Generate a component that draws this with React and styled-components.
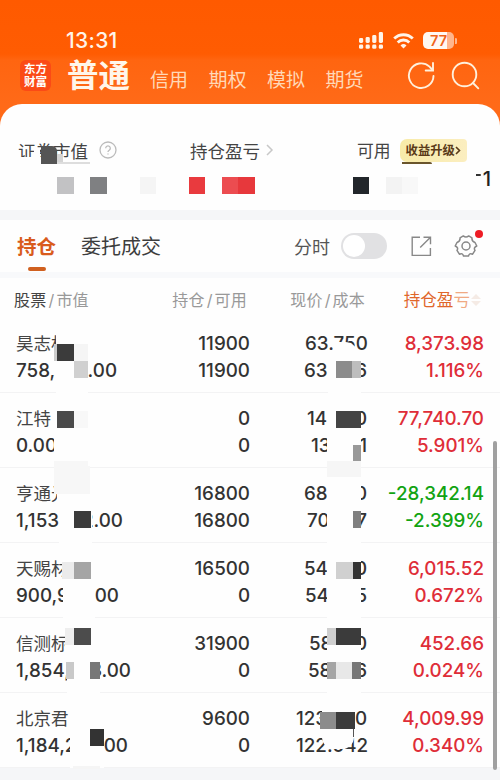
import React from "react";
import styled, { createGlobalStyle } from "styled-components";

const GlobalStyle = createGlobalStyle`
    * {
        box-sizing: border-box;
    }

    body {
        margin: 0;
        background: #f5f6f8;
        font-family: "Inter", "Noto Sans CJK SC", sans-serif;
    }
`;
const StyledPage = styled.div`
    position: relative;
    width: 500px;
    height: 780px;
    overflow: hidden;
    background: #f5f6f8;
    color: #333;
    white-space: nowrap;
`;
const StyledHeader = styled.header`
    height: 126px;
    background: linear-gradient(#ff5a00 0, #ff5c02 54px, #ff6510 60px, #ff6a18 104px);
`;
const StyledStatusBar = styled.div`
    display: flex;
    align-items: center;
    height: 56px;
    padding: 26px 43px 0 66px;
    color: #fff4e9;
`;
const StyledTime = styled.span`
    flex: 1;
    font-size: 21px;
    line-height: 30px;
    font-weight: 500;
    letter-spacing: 0.3px;
`;
const StyledStatusIcons = styled.div`
    display: flex;
    align-items: center;
    gap: 9px;
    margin-top: -1px;
`;
const StyledBattery = styled.div`
    display: flex;
    align-items: center;
    justify-content: center;
    width: 31px;
    height: 17px;
    border-radius: 5px;
    background: linear-gradient(90deg, #fff8f2 24px, #ffb58c 24px);
    color: #f0641a;
    font-size: 14.5px;
    line-height: 17px;
    font-weight: 600;
`;
const StyledNav = styled.nav`
    display: flex;
    align-items: center;
    height: 40px;
    padding: 0 20px;
`;
const StyledLogo = styled.div`
    display: flex;
    flex-direction: column;
    width: 31px;
    height: 31px;
    margin: -1px 16px 0 0;
    padding-top: 2px;
    border-radius: 6px;
    background: #fb4a16;
    color: #fff;
    font-family: "Noto Sans CJK SC", sans-serif;
    font-size: 11.5px;
    line-height: 13px;
    font-weight: 700;
    text-align: center;
`;
const StyledAccount = styled.span`
    width: 83px;
    color: #fff6ea;
    font-size: 31.5px;
    line-height: 40px;
    font-weight: 700;
`;
const StyledAccountTabs = styled.div`
    flex: 1;
    display: flex;
    gap: 20.5px;
    padding-top: 9px;
    color: #ffd9b8;
    font-size: 19px;
    line-height: 28px;
`;
const StyledNavIcons = styled.div`
    display: flex;
    gap: 15px;
    margin-top: -1px;
`;
const StyledSummary = styled.section`
    display: flex;
    height: 106px;
    margin-top: -22px;
    padding: 32px 9px 0 18px;
    border-radius: 22px 22px 0 0;
    background: #fefefe;
    position: relative;
`;
const StyledSummaryItem = styled.div`
    width: ${({ $width }) => $width}px;
`;
const StyledSummaryTitle = styled.div`
    display: flex;
    align-items: center;
    height: 28px;
    color: #444;
    font-size: ${({ $size }) => $size || 17.5}px;
`;
const StyledHelp = styled.svg`
    margin-left: 11px;
`;
const StyledChevron = styled.svg`
    margin-left: 6px;
`;
const StyledBadge = styled.span`
    display: flex;
    align-items: center;
    width: 67px;
    height: 23px;
    margin-left: 9px;
    padding-left: 6px;
    border-radius: 7px 4px 4px 7px;
    background: linear-gradient(90deg, #f8eba8, #fbeec0);
    color: #5a3a18;
    font-size: 12.3px;
    line-height: 23px;
    font-weight: 700;
`;
const StyledTotal = styled.div`
    color: #222;
    font-size: 20px;
    line-height: 24px;
    font-weight: 500;
    text-align: right;
    margin-top: 3px;
`;
const StyledToolbar = styled.div`
    display: flex;
    align-items: center;
    height: 52px;
    margin-top: 10px;
    padding: 0 21px 0 17px;
    background: #fefefe;
`;
const StyledTab = styled.div`
    display: flex;
    flex-direction: column;
    align-items: center;
    height: 52px;
    margin-right: 25px;
    padding-top: 13px;
    color: ${({ $active }) => ($active ? "#d95b1c" : "#3d3d3d")};
    font-size: ${({ $active }) => ($active ? 19.5 : 20)}px;
    line-height: 28px;
    font-weight: ${({ $active }) => ($active ? 700 : 400)};

    &::after {
        content: "";
        width: 18px;
        height: 4px;
        margin-top: 6px;
        border-radius: 2px;
        background: ${({ $active }) => ($active ? "#d0601f" : "transparent")};
    }
`;
const StyledTools = styled.div`
    flex: 1;
    display: flex;
    align-items: center;
    justify-content: flex-end;
    color: #555;
    font-size: 18px;
`;
const StyledSwitch = styled.span`
    width: 46px;
    height: 26px;
    margin: 0 24px 0 11px;
    padding: 2px;
    border-radius: 13px;
    background: #e1e1e3;

    &::after {
        content: "";
        display: block;
        width: 22px;
        height: 22px;
        border-radius: 50%;
        background: #fff;
    }
`;
const StyledSettings = styled.span`
    position: relative;
    display: flex;
    margin: 0 1px 0 22px;

    &::after {
        content: "";
        position: absolute;
        top: -4px;
        right: -5px;
        width: 8px;
        height: 8px;
        border-radius: 50%;
        background: #ee1c25;
    }
`;
const StyledTable = styled.div`
    border-top: 6px solid #f8f9fb;
    background: #fefefe;
`;
const StyledTableHead = styled.div`
    display: grid;
    grid-template-columns: 134px 99px 118px 117px;
    height: 40px;
    padding-left: 14px;
    color: #999;
    font-size: 16px;
    line-height: 44px;
    text-align: right;
`;
const StyledHeadCell = styled.span`
    letter-spacing: 0.2px;

    &:first-child {
        text-align: left;
    }

    b {
        color: #444;
        font-weight: 400;
    }

    i {
        margin: 0 2px;
        font-style: normal;
    }
`;
const StyledSortCell = styled.span`
    display: flex;
    align-items: center;
    justify-content: flex-end;
    color: #e0662a;
    font-size: 16.6px;

    span:last-of-type {
        color: #f0a983;
    }
`;
const StyledRow = styled.div`
    position: relative;
    display: grid;
    grid-template-columns: 134px 100px 117px 117px;
    height: 75px;
    padding: 12px 0 0 16px;
    border-bottom: 1px solid #f3f3f4;
    font-size: 18.8px;
    line-height: 27px;
    font-weight: 500;
    text-align: right;
`;
const StyledName = styled.div`
    color: #444;
    font-size: 17.5px;
    font-weight: 400;
    text-align: left;
`;
const StyledSplit = styled.div`
    display: flex;
    justify-content: space-between;
    width: ${({ $width }) => $width}px;
    margin-left: ${({ $end }) => ($end ? "auto" : 0)};
`;
const StyledProfit = styled.div`
    color: ${({ $down }) => ($down ? "#12a312" : "#df2d38")};
`;
const StyledMask = styled.span`
    position: absolute;
    border-radius: ${({ $radius }) => $radius || 0};
`;
const StyledScrollbar = styled.div`
    position: absolute;
    top: 441px;
    right: 3px;
    width: 4px;
    height: 329px;
    border-radius: 2px;
    background: #a0a0a0;
`;

const accountTabs = ["信用", "期权", "模拟", "期货"];
const white = "#fefefe";

// masks: [left, top, width, height, color, radius]
const summaryMasks = [
    [18, 53, 40, 10, white],
    [34, 44, 6, 14, white],
    [41, 42, 16, 18, "#555", "0 5px 0 0"],
    [57, 50, 6, 10, "#d4d4d4"],
    [57, 58, 33, 2, "#ddd"],
    [57, 73, 17, 17, "#c2c2c4"],
    [90, 73, 17, 17, "#7f8082"],
    [140, 73, 16, 17, "#f5f5f5"],
    [189, 73, 16, 17, "#e93a3e"],
    [222, 73, 16, 17, "#ec4c50"],
    [238, 73, 17, 17, "#e7383c"],
    [353, 73, 16, 17, "#22262b"],
    [386, 73, 16, 17, "#f3f3f3"],
    [402, 73, 16, 17, "#f8f8f8"],
    [470, 70, 12, 18, white],
    [476, 70, 5, 2, "#333", "0 2px 2px 0"],
    [402, 58, 30, 2, "#6a552c", "0 30px 0 0"]
];

const holdings = [
    {
        name: "昊志机",
        value: ["758,", ".00"], valueWidth: 101,
        amount: ["11900", "11900"],
        price: ["63.750"], priceWidth: 62,
        cost: ["63", "6"], costWidth: 63,
        profit: ["8,373.98", "1.116%"],
        masks: [
            [56, 12, 32, 65, white], [54, 26, 3, 17, "#ccc"], [57, 26, 17, 17, "#3b3b3b"],
            [74, 26, 14, 17, "#f5f5f5"], [74, 43, 14, 17, "#d0d0d0"],
            [333, 24, 25, 13, white, "0 14px 0 0"], [328, 37, 33, 40, white],
            [336, 43, 16, 17, "#8c8c8c"], [352, 43, 9, 17, "#bdbdbd"]
        ]
    },
    {
        name: "江特",
        value: ["0.00"], valueWidth: 60,
        amount: ["0", "0"],
        price: ["14", "0"], priceWidth: 60,
        cost: ["13", "1"], costWidth: 56,
        profit: ["77,740.70", "5.901%"],
        masks: [
            [54, 12, 34, 60, white], [57, 18, 17, 17, "#4a4a4a"], [74, 18, 14, 17, "#f8f8f8"],
            [54, 68, 34, 9, "#f7f7f7"], [327, 12, 34, 60, white], [336, 18, 25, 17, "#444"],
            [353, 52, 8, 16, "#999"], [327, 68, 34, 16, "#f6f6f6"]
        ]
    },
    {
        name: "亨通光",
        value: ["1,153", "2.00"], valueWidth: 107,
        amount: ["16800", "16800"],
        price: ["68", "0"], priceWidth: 63,
        cost: ["70", "7"], costWidth: 60,
        profit: ["-28,342.14", "-2.399%"], down: true,
        masks: [
            [57, 18, 33, 22, white, "6px 0 0 0"], [59, 40, 33, 36, white], [54, -2, 36, 28, "#f7f7f7"],
            [74, 43, 17, 17, "#3b3b3b"], [327, 12, 34, 65, white], [353, 43, 8, 17, "#808080"]
        ]
    },
    {
        name: "天赐材",
        value: ["900,9", "00"], valueWidth: 103,
        amount: ["16500", "0"],
        price: ["54", "0"], priceWidth: 63,
        cost: ["54", "5"], costWidth: 62,
        profit: ["6,015.52", "0.672%"],
        masks: [
            [63, 12, 32, 65, white], [62, 19, 12, 17, "#ebebeb"], [74, 19, 17, 17, "#a5a5a5"],
            [327, 12, 34, 65, white], [336, 19, 17, 17, "#d0d0d0"], [353, 19, 8, 17, "#333"]
        ]
    },
    {
        name: "信测标",
        value: ["1,854,", "3.00"], valueWidth: 115,
        amount: ["31900", "0"],
        price: ["58", "0"], priceWidth: 58,
        cost: ["58", "6"], costWidth: 59,
        profit: ["452.66", "0.024%"],
        masks: [
            [65, 10, 26, 26, white], [67, 36, 33, 42, white], [65, 10, 9, 17, "#eee"],
            [74, 10, 17, 17, "#4c4c4c"], [66, 44, 8, 17, "#c9c9c9"], [90, 44, 10, 17, "#777"],
            [327, 10, 34, 67, white], [327, 10, 9, 17, "#cfcfcf"], [336, 10, 25, 17, "#3b3b3b"],
            [327, 44, 9, 17, "#a5a5a5"], [336, 44, 16, 17, "#e8e8e8"], [352, 44, 9, 17, "#777"]
        ]
    },
    {
        name: "北京君",
        value: ["1,184,2", "00"], valueWidth: 112,
        amount: ["9600", "0"],
        price: ["123", "0"], priceWidth: 71,
        cost: ["122.042"], costWidth: 71,
        profit: ["4,009.99", "0.340%"],
        masks: [
            [70, 12, 34, 63, white], [90, 36, 14, 17, "#333"], [322, 18, 33, 18, white],
            [322, 36, 32, 20, white, "0 0 12px 12px"], [320, 19, 16, 17, "#8c8c8c"],
            [336, 19, 19, 17, "#3b3b3b"], [353, 36, 1, 8, "#555"], [73, 73, 27, 3, "#f5f5f5"]
        ]
    }
];

function Masks({ items }) {
    return items.map(([left, top, width, height, background, radius], index) => (
        <StyledMask key={index} $radius={radius} style={{ left, top, width, height, background }}/>
    ));
}

function Split({ parts, width, end }) {
    return (
        <StyledSplit $width={width} $end={end}>
            {parts.map((part) => <span key={part}>{part}</span>)}
        </StyledSplit>
    );
}

function StatusBar() {
    return (
        <StyledStatusBar>
            <StyledTime>13:31</StyledTime>
            <StyledStatusIcons>
                <svg width="25" height="17" fill="currentColor">
                    {[5, 6, 8, 11].map((height, index) => (
                        <rect key={height} x={index * 6.6} y={11 - height} width="4.2" height={height} rx="1.4"/>
                    ))}
                    {[0, 1, 2, 3].map((index) => (
                        <rect key={index} x={index * 6.6} y="12.6" width="4.2" height="4.2" rx="1.4"/>
                    ))}
                </svg>
                <svg width="21" height="16" viewBox="0 0 21 16" fill="none" stroke="currentColor" strokeWidth="2.8">
                    <path d="M1.2 5.6a13.2 13.2 0 0 1 18.6 0"/>
                    <path d="M4.7 9.4a8.2 8.2 0 0 1 11.6 0"/>
                    <path d="M10.5 15.5 7.5 12.4a4.3 4.3 0 0 1 6 0z" fill="currentColor" stroke="none"/>
                </svg>
                <StyledBattery>77</StyledBattery>
                <svg width="2" height="6" style={{ marginLeft: -8 }}>
                    <path d="M0 0a3 3 0 0 1 0 6" fill="#ffb58c"/>
                </svg>
            </StyledStatusIcons>
        </StyledStatusBar>
    );
}

function Nav() {
    return (
        <StyledNav>
            <StyledLogo>
                <span>东方</span>
                <span>财富</span>
            </StyledLogo>
            <StyledAccount>普通</StyledAccount>
            <StyledAccountTabs>
                {accountTabs.map((tab) => <span key={tab}>{tab}</span>)}
            </StyledAccountTabs>
            <StyledNavIcons>
                <svg width="29" height="29" fill="none" stroke="#fff0dc" strokeWidth="1.9" strokeLinecap="round">
                    <path d="M26.5 15a12.3 12.3 0 1 1-4-9.4l3 3.4"/>
                    <path d="M26 2v7.5h-7.3"/>
                </svg>
                <svg width="29" height="29" fill="none" stroke="#fff0dc" strokeWidth="1.9" strokeLinecap="round">
                    <circle cx="13.5" cy="13.5" r="11.8"/>
                    <path d="m22 22 5.3 5.3"/>
                </svg>
            </StyledNavIcons>
        </StyledNav>
    );
}

function Summary() {
    return (
        <StyledSummary>
            <StyledSummaryItem $width={172}>
                <StyledSummaryTitle>
                    证券市值
                    <StyledHelp width="18" height="18" fill="none" stroke="#bbb" strokeWidth="1.3">
                        <circle cx="9" cy="9" r="8"/>
                        <path d="M6.7 7.2a2.3 2.3 0 1 1 3.5 2c-.8.5-1.2.9-1.2 1.8M9 12.4v1.2"/>
                    </StyledHelp>
                </StyledSummaryTitle>
            </StyledSummaryItem>
            <StyledSummaryItem $width={167}>
                <StyledSummaryTitle>
                    持仓盈亏
                    <StyledChevron width="8" height="12" fill="none" stroke="#c8c8c8" strokeWidth="1.5">
                        <path d="m1 1 5 5-5 5"/>
                    </StyledChevron>
                </StyledSummaryTitle>
            </StyledSummaryItem>
            <StyledSummaryItem $width={134}>
                <StyledSummaryTitle $size={16.8}>
                    可用
                    <StyledBadge>
                        收益升级
                        <svg width="6" height="9" fill="none" stroke="currentColor" strokeWidth="1.6">
                            <path d="m1 1 3.5 3.5L1 8"/>
                        </svg>
                    </StyledBadge>
                </StyledSummaryTitle>
                <StyledTotal>1</StyledTotal>
            </StyledSummaryItem>
            <Masks items={summaryMasks}/>
        </StyledSummary>
    );
}

function Toolbar() {
    return (
        <StyledToolbar>
            <StyledTab $active>持仓</StyledTab>
            <StyledTab>委托成交</StyledTab>
            <StyledTools>
                分时
                <StyledSwitch/>
                <svg width="21" height="21" fill="none" stroke="#888" strokeWidth="1.4">
                    <path d="M9 1.2H1.2v18.2h18.2V12M12.5 1.2h7v7M19 1.7 9.2 11.5"/>
                </svg>
                <StyledSettings>
                    <svg width="24" height="24" viewBox="0 0 24 24" fill="none" stroke="#888" strokeWidth="1.5" strokeLinejoin="round">
                        <path d="M9.3 1.9Q12 4.2 14.7 1.9L18 3.8Q17.5 7.4 21 8.5L22.8 12Q19.2 13.6 21 16.4L18.6 20.2Q15.3 18.7 14.5 22.1H9.5Q8.7 18.7 5.4 20.2L3 16.4Q4.8 13.6 1.2 12L3 8.5Q6.5 7.4 6 3.8Z"/>
                        <circle cx="12" cy="12" r="4"/>
                    </svg>
                </StyledSettings>
            </StyledTools>
        </StyledToolbar>
    );
}

function Holding({ holding }) {
    return (
        <StyledRow>
            <div>
                <StyledName>{holding.name}</StyledName>
                <Split parts={holding.value} width={holding.valueWidth}/>
            </div>
            <div>
                <div>{holding.amount[0]}</div>
                <div>{holding.amount[1]}</div>
            </div>
            <div>
                <Split parts={holding.price} width={holding.priceWidth} end/>
                <Split parts={holding.cost} width={holding.costWidth} end/>
            </div>
            <StyledProfit $down={holding.down}>
                <div>{holding.profit[0]}</div>
                <div>{holding.profit[1]}</div>
            </StyledProfit>
            <Masks items={holding.masks}/>
        </StyledRow>
    );
}

export default function App() {
    return (
        <StyledPage>
            <GlobalStyle/>
            <StyledHeader>
                <StatusBar/>
                <Nav/>
            </StyledHeader>
            <Summary/>
            <Toolbar/>
            <StyledTable>
                <StyledTableHead>
                    <StyledHeadCell><b>股票</b><i>/</i>市值</StyledHeadCell>
                    <StyledHeadCell>持仓<i>/</i>可用</StyledHeadCell>
                    <StyledHeadCell>现价<i>/</i>成本</StyledHeadCell>
                    <StyledSortCell>
                        <span>持仓盈</span>
                        <span>亏</span>
                        <svg width="12" height="12" fill="#f5ebe5">
                            <path d="M6 0l5 5H1zM6 12 1 7h10z"/>
                        </svg>
                    </StyledSortCell>
                </StyledTableHead>
                {holdings.map((holding) => <Holding key={holding.name} holding={holding}/>)}
            </StyledTable>
            <StyledScrollbar/>
        </StyledPage>
    );
}
